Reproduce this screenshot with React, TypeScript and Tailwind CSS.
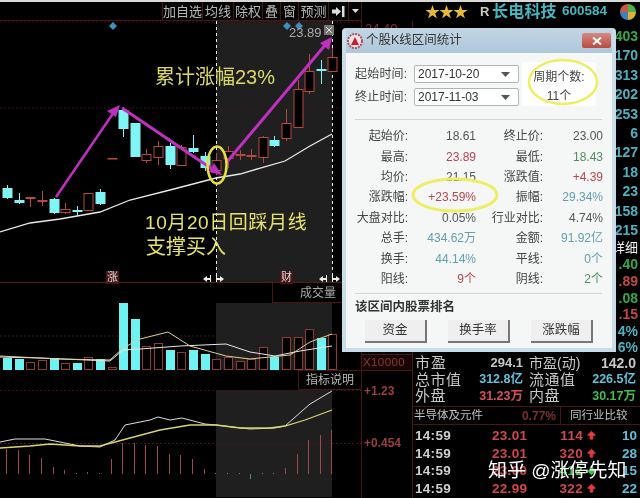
import { ArrowBigDown, ArrowBigUp } from "lucide-react";

type Candle = [number, number, number, number, number, "r" | "c"];

const candles: Candle[] = [
  [7, 188, 197, 185, 199, "c"],
  [19, 200, 202, 193, 204, "c"],
  [30, 197, 198, 197, 207, "r"],
  [42, 200, 201, 191, 206, "r"],
  [54, 199, 212, 198, 214, "c"],
  [65, 209, 212, 203, 214, "r"],
  [77, 210, 211, 206, 216, "c"],
  [88, 193, 210, 193, 210, "r"],
  [100, 192, 203, 189, 205, "c"],
  [112, 158, 158, 158, 158, "r"],
  [123, 110, 128, 107, 137, "c"],
  [135, 123, 156, 123, 156, "c"],
  [146, 154, 160, 149, 163, "r"],
  [158, 146, 157, 141, 165, "r"],
  [170, 146, 164, 143, 169, "c"],
  [181, 147, 165, 145, 165, "r"],
  [193, 148, 151, 135, 153, "c"],
  [205, 156, 167, 152, 171, "c"],
  [216, 160, 170, 153, 175, "r"],
  [228, 151, 158, 146, 168, "r"],
  [240, 154, 155, 150, 160, "r"],
  [251, 155, 156, 149, 160, "r"],
  [263, 137, 157, 136, 163, "r"],
  [274, 140, 145, 136, 147, "c"],
  [286, 123, 138, 109, 141, "r"],
  [298, 89, 127, 80, 128, "r"],
  [309, 71, 91, 54, 94, "r"],
  [321, 69, 70, 60, 84, "c"],
  [332, 57, 71, 48, 71, "r"],
];

const volume: [number, number, "r" | "c"][] = [
  [7, 358, "c"], [19, 359, "c"], [30, 362, "r"], [42, 360, "r"], [54, 358, "c"],
  [65, 363, "r"], [77, 363, "c"], [88, 357, "r"], [100, 359, "c"], [112, 367, "r"],
  [123, 303, "c"], [135, 319, "c"], [146, 346, "r"], [158, 343, "r"], [170, 350, "c"],
  [181, 352, "r"], [193, 350, "c"], [205, 354, "c"], [216, 359, "r"], [228, 357, "r"],
  [240, 361, "r"], [251, 359, "r"], [263, 347, "r"], [274, 357, "c"], [286, 337, "r"],
  [298, 337, "r"], [309, 329, "r"], [321, 338, "c"], [332, 334, "r"],
];

const macd: [number, number, "r" | "g"][] = [
  [7, 449, "r"], [19, 450, "r"], [30, 455, "r"], [42, 458, "r"], [54, 467, "r"],
  [65, 470, "r"], [77, 473, "g"], [88, 472, "r"], [100, 473, "r"], [112, 459, "r"],
  [123, 443, "r"], [135, 443, "r"], [146, 445, "r"], [158, 446, "r"], [170, 454, "r"],
  [181, 455, "r"], [193, 459, "r"], [205, 469, "r"], [216, 473, "g"], [228, 473, "g"],
  [240, 473, "g"], [251, 479, "g"], [263, 473, "g"], [274, 473, "g"], [286, 468, "r"],
  [298, 454, "r"], [309, 440, "r"], [321, 435, "r"], [332, 430, "r"],
];

const stats = [
  ["起始价:", "18.61", "text-[#555]", "终止价:", "23.00", "text-[#555]"],
  ["最高:", "23.89", "text-[#b5474f]", "最低:", "18.43", "text-[#4f8f5f]"],
  ["均价:", "21.15", "text-[#555]", "涨跌值:", "+4.39", "text-[#b5474f]"],
  ["涨跌幅:", "+23.59%", "text-[#b5474f]", "振幅:", "29.34%", "text-[#5f9fb0]"],
  ["大盘对比:", "0.05%", "text-[#555]", "行业对比:", "4.74%", "text-[#555]"],
  ["总手:", "434.62万", "text-[#5f9fb0]", "金额:", "91.92亿", "text-[#5f9fb0]"],
  ["换手:", "44.14%", "text-[#5f9fb0]", "平线:", "0个", "text-[#5f9fb0]"],
  ["阳线:", "9个", "text-[#b5474f]", "阴线:", "2个", "text-[#4f8f5f]"],
];

const book = [
  ["403", "text-[#35a84a]"], ["170", "text-[#4fb0c0]"], ["313", "text-[#4fb0c0]"],
  ["202", "text-[#4fb0c0]"], ["253", "text-[#4fb0c0]"], ["6", "text-[#4fb0c0]"],
  ["127", "text-[#4fb0c0]"], ["18", "text-[#4fb0c0]"], ["23", "text-[#4fb0c0]"],
  ["158", "text-[#4fb0c0]"], ["215", "text-[#4fb0c0]"],
];

const quotes = [
  ["总市值", "312.8亿", "text-[#5fc0dc]", "流通值", "226.5亿", "text-[#5fc0dc]"],
  ["外盘", "31.23万", "text-[#d9505a]", "内盘", "30.17万", "text-[#3fc04a]"],
];

const ticks = [
  ["23.01", "114", "10", "up"],
  ["23.01", "320", "28", "up"],
  ["23.00", "412", "15", "down"],
  ["22.99", "322", "22", "up"],
];

const buttons = [
  ["加自选", "w-[40px]"],
  ["均线", "w-[31px]"],
  ["除权", "w-[29px]"],
  ["叠", "w-[18px]"],
  ["窗", "w-[18px]"],
  ["预测", "w-[30px]"],
];

const Poly = ({ d, color, w = 1 }: { d: string; color: string; w?: number }) => (
  <polyline points={d} fill="none" stroke={color} strokeWidth={w} />
);

const Split = ({ x }: { x: number }) => (
  <>
    <polygon points={`${x - 9},279 ${x - 5},276 ${x - 5},282`} fill="#eee" />
    <rect x={x - 5} y={278} width={3} height={2} fill="#eee" />
    <rect x={x - 2} y={275} width={1} height={8} fill="#eee" />
    <rect x={x + 4} y={275} width={1} height={8} fill="#eee" />
    <rect x={x + 5} y={278} width={3} height={2} fill="#eee" />
    <polygon points={`${x + 12},279 ${x + 8},276 ${x + 8},282`} fill="#eee" />
  </>
);

export default function App() {
  return (
    <div className="relative flex h-[498px] w-[640px] flex-col overflow-hidden bg-black font-['Liberation_Sans','Noto_Sans_CJK_SC',sans-serif] blur-[0.4px]">
      <div className="h-[2px] bg-[#d8d8d8]" />

      {/* top bar */}
      <div className="flex h-[19px]">
        <div className="flex w-[362px] justify-end border-b border-[#4a1515]">
          {buttons.map(([label, w]) => (
            <div key={label} className={`flex items-center justify-center border-l border-[#4a1515] text-[13px] leading-none text-[#b8b8b8] ${w}`}>
              {label}
            </div>
          ))}
          <div className="flex w-[20px] items-center justify-center border-l border-[#4a1515]">
            <svg width="13" height="11" viewBox="0 0 13 11">
              <path d="M0 3.5h4V1l5 4.5L4 10V7.5H0z" fill="#ddd" />
              <rect x="10" y="0" width="2.5" height="11" fill="#ddd" />
            </svg>
          </div>
          <div className="flex w-[14px] items-center justify-center border-x border-[#4a1515]">
            <svg width="7" height="4" viewBox="0 0 7 4"><path d="M0 0h7L3.500 4z" fill="#ddd" /></svg>
          </div>
        </div>
        <div className="flex flex-1 items-center">
          <div className="ml-[63px] w-[54px] text-[15px] leading-none tracking-[-1px] text-[#e8b83c]">★★★</div>
          <div className="ml-[1px] w-[12px] text-[13px] font-bold text-[#ccc]">R</div>
          <div className="w-[70px] text-[16px] font-bold tracking-[0.2px] text-[#45b5c0]">长电科技</div>
          <div className="w-[52px] text-[13.500px] font-bold text-[#45b5c0]">600584</div>
          <svg className="ml-[6px]" width="16" height="16" viewBox="0 0 16 16">
            <path d="M8 8V0a8 8 0 0 1 8 8z" fill="#4caf50" />
            <path d="M8 8h8a8 8 0 0 1-8 8z" fill="#e0b030" />
            <path d="M8 8v8a8 8 0 0 1-8-8z" fill="#3f80c0" />
            <path d="M8 8H0a8 8 0 0 1 8-8z" fill="#c85a40" />
          </svg>
        </div>
      </div>

      <div className="flex flex-1">
        {/* charts */}
        <div className="flex w-[362px] flex-col border-r border-[#4a1515]">
          <div className="relative h-[262px] border-b border-[#5a1a1a]">
            <svg width="361" height="261" viewBox="0 21 361 261" className="block">
              <rect x="216" y="21" width="116" height="261" fill="#1f1f1f" />
              <line x1="0" x2="361" y1="108" y2="108" stroke="#3a1212" strokeDasharray="2 2" />
              <line x1="0" x2="361" y1="22" y2="22" stroke="#3a1212" strokeDasharray="2 2" />
              <line x1="216.500" x2="216.500" y1="21" y2="282" stroke="#eee" strokeDasharray="3 3" />
              <line x1="332.500" x2="332.500" y1="21" y2="282" stroke="#eee" strokeDasharray="3 3" />
              <Poly d="0,232 30,223 60,219 100,212 130,200 170,190 216,178 240,174 285,161 310,146 332,134" color="#e8e8e8" w={1.3} />
              {candles.map(([x, t, b, wt, wb, k]) => {
                const c = k === "r" ? "#b8483f" : "#7ff5f5";
                return (
                  <g key={x}>
                    <line x1={x + 0.5} x2={x + 0.5} y1={wt} y2={wb} stroke={c} />
                    <rect
                      x={x - 4}
                      y={t + 0.5}
                      width={9}
                      height={Math.max(b - t, 0.5)}
                      fill={k === "r" ? "#000" : c}
                      stroke={c}
                    />
                  </g>
                );
              })}
              {[113, 287, 299].map((x) => (
                <polygon key={x} points={`${x},22 ${x + 4},26 ${x},30 ${x - 4},26`} fill="#3f8fb8" />
              ))}
              <rect x="324" y="25" width="10" height="10" fill="#777" />
              <path d="M326 27l6 6M332 27l-6 6" stroke="#ddd" />
              <g stroke="#c030c0" fill="#c030c0">
                <line x1="56" y1="197" x2="114" y2="112" strokeWidth="2.500" />
                <polygon points="120,105 116,117 107,111" stroke="none" />
                <line x1="122" y1="108" x2="215" y2="171" strokeWidth="3" />
                <polygon points="222,175 209,172 214,163" stroke="none" />
                <line x1="226" y1="163" x2="326" y2="44" strokeWidth="3" />
                <polygon points="332,37 329,50 320,43" stroke="none" />
              </g>
              <ellipse cx="217" cy="165" rx="9.500" ry="18.500" fill="none" stroke="#e8e040" strokeWidth="2.500" />
              <Split x={212} />
              <Split x={328} />
            </svg>
            <span className="absolute left-[289px] top-[5px] text-[13px] leading-none text-[#aaa]">23.89</span>
            <span className="absolute left-[155px] top-[46px] text-[20px] leading-none text-[#dcd868]">累计涨幅23%</span>
            <span className="absolute left-[145px] top-[192px] text-[19px] leading-none tracking-[0.6px] text-[#e6e26a]">10月20日回踩月线</span>
            <span className="absolute left-[146px] top-[216px] text-[20px] leading-none text-[#e6e26a]">支撑买入</span>
            <span className="absolute left-[106px] top-[250px] bg-[#4a1515] px-[1px] text-[11px] leading-[13px] text-[#ddd]">涨</span>
            <span className="absolute left-[280px] top-[250px] bg-[#4a1515] px-[1px] text-[11px] leading-[13px] text-[#ddd]">财</span>
          </div>

          <div className="flex h-[20px] justify-end">
            <div className="flex w-[89px] items-center border-b border-l border-[#4a1515] pl-[27px] text-[12px] text-[#aaa]">成交量</div>
          </div>

          <svg width="361" height="67" viewBox="0 303 361 67" className="block">
            <rect x="216" y="303" width="116" height="67" fill="#1f1f1f" />
            <line x1="0" x2="361" y1="336" y2="336" stroke="#3a1212" strokeDasharray="2 2" />
            {volume.map(([x, t, k]) => (
              <rect
                key={x}
                x={x - 3.5}
                y={t + 0.5}
                width={8}
                height={370 - t - 1}
                fill={k === "r" ? "#000" : "#6ff2f2"}
                stroke={k === "r" ? "#8e3a36" : "#6ff2f2"}
              />
            ))}
            <Poly d="0,357 40,358 110,361 123,350 140,349 180,346 226,344 250,352 275,356 300,351 332,346" color="#e8e8e8" />
            <Poly d="0,356 60,359 110,360 123,348 140,339 168,332 190,346 226,356 250,359 290,355 310,342 332,334" color="#d8d49a" />
          </svg>

          <div className="flex h-[20px] justify-end">
            <div className="flex w-[63px] items-center justify-center border-b border-l border-t border-[#4a1515] text-[12px] text-[#b8b8b8]">指标说明</div>
          </div>

          <svg width="361" height="107" viewBox="0 390 361 107" className="block">
            <rect x="216" y="390" width="116" height="107" fill="#1f1f1f" />
            <line x1="0" x2="361" y1="390.500" y2="390.500" stroke="#3a1212" strokeDasharray="2 2" />
            <line x1="0" x2="361" y1="443.500" y2="443.500" stroke="#4a1515" strokeDasharray="2 2" />
            {macd.map(([x, t, k]) => (
              <line
                key={x}
                x1={x - 0.5}
                x2={x - 0.5}
                y1={t}
                y2={474}
                stroke={k === "r" ? "#a0484a" : "#3f9a55"}
              />
            ))}
            <Poly d="0,442 15,439 45,439 60,442 80,446 100,447 115,440 125,425 150,420 158,417 170,420 182,418 205,424 216,425 250,429 275,428 285,426 310,404 332,391" color="#dcdcdc" />
            <Poly d="0,448 30,446 50,444 80,446 100,446 130,438 160,430 190,425 216,425 240,428 270,428 285,426 305,420 332,410" color="#d8d470" w={1.300} />
          </svg>
        </div>

        {/* axis */}
        <div className="w-[51px] border-r border-[#4a1515]">
          <div className="h-[333px] pl-[3px] text-[13px] leading-[16px] text-[#8a3030]">24.40</div>
          <div className="flex h-[17px] items-center border-y border-[#4a1515] bg-[#1a0505] pl-[1px] text-[11.500px] tracking-[0.4px] text-[#8a3a3a]">X10000</div>
          <div className="mt-[12px] pl-[2px] text-[12px] font-bold leading-[16px] text-[#9a3f3f]">+1.23</div>
          <div className="mt-[36px] pl-[2px] text-[12px] font-bold leading-[16px] text-[#9a3f3f]">+0.454</div>
        </div>

        {/* quotes */}
        <div className="flex flex-1 flex-col">
          <div className="flex h-[333px] flex-col items-end pr-[2px] pt-[6px] text-[14px] font-bold leading-[19.4px]">
            {book.map(([v, c], i) => (
              <div key={i} className={c}>{v}</div>
            ))}
            <div className="text-[13px] font-normal leading-[16px] text-[#eee]">详细</div>
            <div className="leading-[16.600px] text-[#35a84a]">.40</div>
            <div className="leading-[16.600px] text-[#c0484a]">.89</div>
            <div className="leading-[16.600px] text-[#35a84a]">.08</div>
            <div className="leading-[16.600px] text-[#c0484a]">.15</div>
            <div className="leading-[16.600px] text-[#4fb0c0]">4%</div>
            <div className="leading-[16.600px] text-[#4fb0c0]">6%</div>
          </div>

          <div className="flex h-[17px] items-center pl-[2px] text-[15px] leading-none text-[#c8c8c8]">
            <div className="w-[64px] tracking-[1px]">市盈</div>
            <div className="w-[44px] text-right text-[13px] font-bold">294.1</div>
            <div className="ml-[6px] w-[56px] whitespace-nowrap text-[14px]">市盈(动)</div>
            <div className="w-[51px] text-right text-[14px] font-bold">142.0</div>
          </div>
          {quotes.map(([a, av, ac, b, bv, bc]) => (
            <div key={a} className="flex h-[16.500px] items-center pl-[2px] text-[15px] leading-none text-[#c8c8c8]">
              <div className="w-[60px] tracking-[0.5px]">{a}</div>
              <div className={`w-[48px] text-right text-[12.500px] font-bold ${ac}`}>{av}</div>
              <div className="ml-[6px] w-[56px] tracking-[0.5px]">{b}</div>
              <div className={`w-[51px] text-right text-[12.500px] font-bold ${bc}`}>{bv}</div>
            </div>
          ))}

          <div className="mt-[2px] flex h-[19px] items-center border-y border-[#4a1515] pl-[1px] text-[11.500px] text-[#c0c0c0]">
            <div className="w-[108px]">半导体及元件</div>
            <div className="w-[38px] text-[12px] font-bold text-[#7a2f2f]">0.77%</div>
            <div className="flex h-full flex-1 items-center border-l border-[#4a1515] pl-[9px]">同行业比较</div>
          </div>

          <div className="flex flex-col pt-[2px] text-[13.500px] font-bold">
            {ticks.map(([p, v, n, dir], i) => (
              <div key={i} className="flex h-[17.500px] items-center pl-[2px] leading-none">
                <div className="w-[77px] tracking-[0.3px] text-[#cfcfcf]">14:59</div>
                <div className="w-[36px] tracking-[0.3px] text-[#d0474c]">{p}</div>
                <div className={`ml-[30px] w-[25px] text-right tracking-[0.3px] ${dir === "up" ? "text-[#d0474c]" : "text-[#3fc04a]"}`}>{v}</div>
                <div className="ml-[3px]">
                  {dir === "up" ? (
                    <ArrowBigUp className="size-[11px] text-[#e0393e]" fill="currentColor" />
                  ) : (
                    <ArrowBigDown className="size-[11px] text-[#3fc04a]" fill="currentColor" />
                  )}
                </div>
                <div className="ml-[25px] text-[#5fc0dc]">{n}</div>
              </div>
            ))}
          </div>
        </div>
      </div>

      {/* watermark */}
      <div className="absolute left-[488px] top-[460px] whitespace-nowrap text-[19px] leading-[22px] text-white">知乎 @涨停先知</div>

      {/* range dialog */}
      <div className="absolute left-[342px] top-[28px] flex h-[324px] w-[274px] flex-col rounded-t-[4px] bg-[#c9dde8] px-[4px] pb-[4px] text-[12px] text-[#444]">
        <div className="flex h-[25px] items-center bg-[linear-gradient(#c2d5e4,#aec8da)]">
          <svg className="ml-[1px]" width="16" height="16" viewBox="0 0 16 16">
            <circle cx="8" cy="8" r="7" fill="#f3e6e6" stroke="#b05060" strokeDasharray="2 1" strokeWidth="2" />
            <path d="M8 4l4 8H4z" fill="#c02030" />
          </svg>
          <span className="ml-[3px] text-[12.500px] text-[#333]">个股K线区间统计</span>
          <div className="ml-auto mr-[1px] flex h-[15px] w-[29px] items-center justify-center rounded-[2px] bg-[linear-gradient(#d58a80,#bb4a40)]">
            <svg width="10" height="8" viewBox="0 0 10 8"><path d="M1 0.500l8 7M9 0.500l-8 7" stroke="#fff" strokeWidth="2" /></svg>
          </div>
        </div>

        <div className="flex flex-1 flex-col bg-[#f5f6f6]">
          <div className="flex h-[66px] pl-[9px] pt-[9px]">
            <div className="flex w-[167px] flex-col gap-[5px] pt-[3px]">
              {[["起始时间:", "2017-10-20"], ["终止时间:", "2017-11-03"]].map(([l, v]) => (
                <div key={l} className="flex h-[18px] items-center">
                  <span className="w-[59px] whitespace-nowrap text-[12px] tracking-[0.2px]">{l}</span>
                  <div className="flex h-[18px] w-[105px] items-center justify-between rounded-[2px] border border-[#aeb4b8] bg-white pl-[3px] pr-[8px] text-[12px] text-[#333]">
                    {v}
                    <svg width="9" height="5" viewBox="0 0 9 5"><path d="M0 0h9L4.500 5z" fill="#555" /></svg>
                  </div>
                </div>
              ))}
            </div>
            <div className="flex h-[44px] w-[74px] flex-col items-center bg-white text-[12px] leading-[19px]">
              <span className="mt-[6px]">周期个数:</span>
              <span>11个</span>
            </div>
          </div>

          <div className="mx-[9px] h-[1px] w-[247px] bg-[#d4d4d4]" />

          <div className="mt-[6px] flex flex-col">
            {stats.map(([a, av, ac, b, bv, bc]) => (
              <div key={a} className="grid h-[20.400px] grid-cols-[62px_68px_67px_60px] items-center text-[12px]">
                <span className="whitespace-nowrap text-right">{a}</span>
                <span className={`text-right ${ac}`}>{av}</span>
                <span className="whitespace-nowrap text-right">{b}</span>
                <span className={`text-right ${bc}`}>{bv}</span>
              </div>
            ))}
          </div>

          <div className="mx-[9px] mt-[4px] h-[1px] w-[247px] bg-[#d4d4d4]" />
          <div className="ml-[9px] mt-[5px] text-[12.500px] font-bold leading-[16px] text-[#333]">该区间内股票排名</div>

          <div className="mt-[5px] flex gap-[21px] pl-[19px]">
            {["资金", "换手率", "涨跌幅"].map((b) => (
              <div key={b} className="flex h-[23px] w-[62px] items-center justify-center border-b-2 border-r-2 border-[#777] bg-[#efefef] text-[12.500px] text-[#333]">
                {b}
              </div>
            ))}
          </div>
        </div>

        <svg className="absolute left-0 top-0 pointer-events-none" width="274" height="324" viewBox="342 28 274 324">
          <ellipse cx="563" cy="82" rx="34" ry="22" fill="none" stroke="#eeee60" strokeWidth="2.500" />
          <ellipse cx="455" cy="195" rx="42" ry="16" fill="none" stroke="#eeee60" strokeWidth="3" />
        </svg>
      </div>
    </div>
  );
}
